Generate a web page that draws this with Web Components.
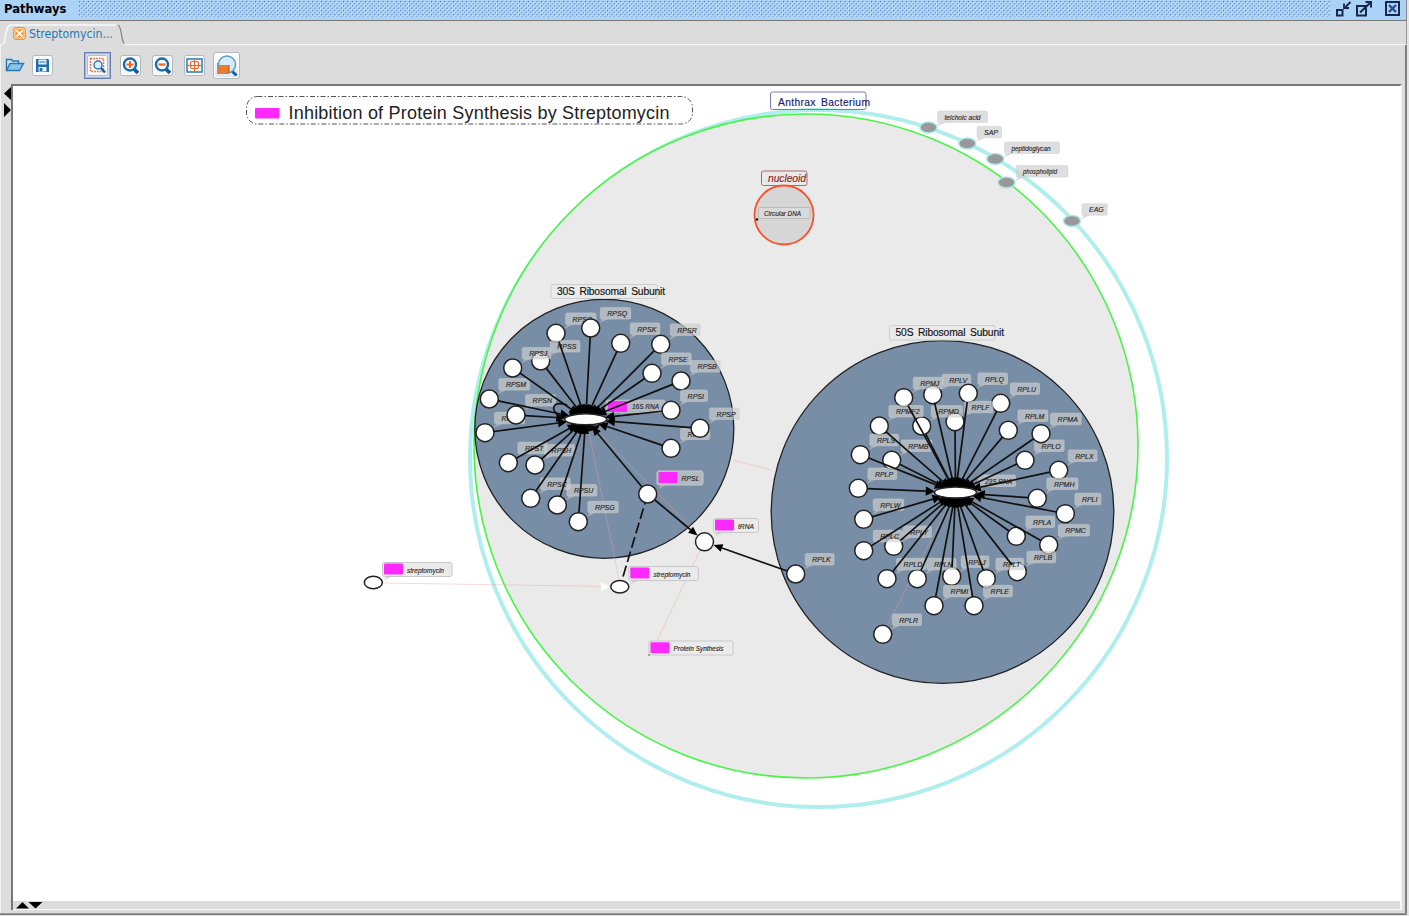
<!DOCTYPE html>
<html lang="en">
<head>
<meta charset="utf-8">
<title>Pathways</title>
<style>
html,body{margin:0;height:100%;overflow:hidden;background:#dcdcdc}
body{font-family:"DejaVu Sans","Noto Sans",sans-serif}
</style>
</head>
<body>
<pathway-window>
  <window-title slot="title">Pathways</window-title>
  <document-tab slot="tabs">Streptomycin...</document-tab>
  <tool-bar slot="tools"></tool-bar>
  <pathway-canvas slot="canvas"></pathway-canvas>
</pathway-window>

<script>
const shadow = (el, html) => { el.attachShadow({mode:'open'}).innerHTML = html; };

customElements.define('pathway-window', class extends HTMLElement {
  constructor(){ super(); shadow(this, `
<style>
:host{display:flex;flex-direction:column;box-sizing:border-box;width:1409px;height:916px;background:#dcdcdc;border-right:2px solid #e6e6e6}
.tabs{box-sizing:border-box;height:24px;border-bottom:1px solid #f6f6f6;border-right:1px solid #999;padding-left:3px}
.body{flex:1;display:flex;flex-direction:column;border-right:2px solid #808080;border-left:1px solid #f4f4f4;min-height:0}
.tools{height:39px}
.main{display:flex;box-sizing:border-box;padding-right:3px;height:826px}
.rail{width:10px;padding-top:3px;box-sizing:border-box}
.rail svg{display:block}
.view{flex:1;display:flex;flex-direction:column;border-left:2px solid #777;border-top:2px solid #777;border-right:2px solid #f7f7f7;box-sizing:border-box;min-width:0}
.canvas{height:815px;overflow:hidden;background:#fff}
.foot{flex:1;border-bottom:1px solid #f8f8f8}
.foot svg{display:block}
.edge{height:1px;background:#777;border-top:1px solid #999;border-bottom:1px solid #e2e2e2}
</style>
<slot name="title"></slot>
<div class="tabs"><slot name="tabs"></slot></div>
<div class="body">
 <div class="tools"><slot name="tools"></slot></div>
 <div class="main">
  <div class="rail"><svg width="10" height="30"><path d="M10 0v13L3 6.500zM3 16v14L10 23z"/></svg></div>
  <div class="view"><div class="canvas"><slot name="canvas"></slot></div>
  <div class="foot"><svg width="40" height="8"><path d="M3 7.500 9.500 1 16 7.500zM15.500 1h14L22.500 7.500z"/></svg></div></div>
 </div>
</div>
<div class="edge"></div>`); }
});

customElements.define('window-title', class extends HTMLElement {
  constructor(){ super(); shadow(this, `
<style>
:host{display:flex;align-items:flex-start;box-sizing:border-box;height:21px;background:#abd2f7;border-bottom:1px solid #777;border-right:1px solid #888;padding:0 6px 0 4px}
b{width:75px;flex:none;font:bold 11.500px/18px "DejaVu Sans",sans-serif;color:#000}
b span{display:inline-block;transform:scaleX(1.008);transform-origin:0 0}
svg{display:block;flex:none}
.grip{margin-top:1px}
.ic{margin-left:3px}
</style>
<b><span><slot></slot></span></b>
<svg class="grip" width="1251" height="17"><defs><pattern id="g" width="4" height="4" patternUnits="userSpaceOnUse" patternTransform="scale(1.1)"><rect width="4" height="4" fill="#abd2f7"/><path d="M0 0h1v1h-1zM2 2h1v1h-1z" fill="#3560a0"/><path d="M1 1h1v1h-1zM3 3h1v1h-1z" fill="#e4f2ff"/></pattern></defs><rect width="1251" height="16" fill="url(#g)"/></svg>
<svg class="ic" width="70" height="18" fill="none" stroke="#16294d" stroke-width="2">
<path d="M4 10h5.500v5.500H4z"/><path d="M17.500 2 11 8.500M11 3.500V8h5" stroke-width="1.800"/>
<path d="M24 6h9v9.500h-9z"/><path d="M27 12.500 38 2M32.500 2H38v5.500" stroke-width="2"/>
<path d="M53 2h13v13H53z"/><path d="m56 5 7 7m0-7-7 7" stroke="#2c4d8e" stroke-width="2.400"/></svg>`); }
});

customElements.define('document-tab', class extends HTMLElement {
  constructor(){ super(); shadow(this, `
<style>
:host{display:grid;width:124px;height:24px;font:12px/24px "DejaVu Sans",sans-serif;color:#2279b5}
svg,.t{grid-area:1/1}
.t{display:flex;align-items:center;gap:3px;padding:0 0 0 10px;height:25px}
.t span{display:block;transform:scaleX(.915);transform-origin:0 0;white-space:nowrap}
</style>
<svg width="124" height="24"><path d="M0 24C3 20 2 4 8 4H113C117 4 118 20 121 24" fill="#dcdcdc"/><path d="M0 23C3 20 2 4 8 4H113" fill="none" stroke="#f8f8f8" stroke-width="1.500"/><path d="M115 4C119 6 118 19 121 22.500" fill="none" stroke="#888" stroke-width="1.300"/></svg>
<div class="t"><svg width="13" height="13" style="grid-area:auto"><rect x=".5" y=".5" width="12" height="12" rx="2.500" fill="#ffc583" stroke="#ee9636"/><path d="m3.500 3.500 6 6m0-6-6 6" stroke="#ee8424" stroke-width="4"/><path d="m3.500 3.500 6 6m0-6-6 6" stroke="#fff" stroke-width="2"/></svg><span><slot></slot></span></div>`); }
});

customElements.define('tool-button', class extends HTMLElement {
  constructor(){ super(); shadow(this, `
<style>
:host{display:flex;align-items:center;justify-content:center;box-sizing:border-box;flex:none;width:21px;height:21px;border:1px solid #b3b8bd;border-radius:3px;background:#f5f8fa;box-shadow:inset 0 0 0 1px #fff}
:host([flat]){border:0;background:none;box-shadow:none;width:20px}
:host([active]){width:27px;height:27px;border:1px solid #667cab;border-radius:0;background:#d4dbe7;box-shadow:inset 0 0 0 1px #aab6d0}
:host([big]){width:27px;height:27px;background:linear-gradient(#fff,#dce9f2)}
</style><slot></slot>`); }
});

customElements.define('tool-bar', class extends HTMLElement {
  constructor(){
    super();
    const mag = s => `<svg width="19" height="19"><path d="m12 12 5 5" stroke="#155d9a" stroke-width="3.800"/><circle cx="9" cy="8.500" r="6" fill="#fff" stroke="#1c68a8" stroke-width="2.400"/><path d="${s}" stroke="#f26522" stroke-width="2.200"/></svg>`;
    shadow(this, `
<style>
:host{display:flex;align-items:center;height:40px;padding-left:4px}
svg{display:block}
.gap{width:31px}.g{width:9px}.h{width:11px}.i{width:8px}.m{width:7px}
</style>
<tool-button flat><svg width="20" height="16"><path d="M1.500 13.500v-11h5l1 1.500h6v2.500" fill="#cde5f5" stroke="#2978b2" stroke-width="1.400"/><path d="M1.500 13.500 5 6.500h13.500l-4 7z" fill="#8cc3e6" stroke="#2978b2" stroke-width="1.400"/></svg></tool-button>
<div class="m"></div>
<tool-button><svg width="15" height="15"><path d="M1 1h12l1 1v12H1z" fill="#1d6fae"/><path d="M3.500 1.500h8v5h-8zM3.500 9h8v4.500h-8z" fill="#e8f4fc"/><path d="M4.500 4h6M5 10.500h2v2H5z" stroke="#1d6fae" fill="#1d6fae"/></svg></tool-button>
<div class="gap"></div>
<tool-button active><svg width="21" height="21"><rect x=".5" y=".5" width="20" height="20" rx="2" fill="#f9fafb" stroke="#b7babd"/><path d="M3.500 3.500h13v13h-13z" fill="none" stroke="#e9733d" stroke-width="1.500" stroke-dasharray="1.800 1"/><circle cx="11" cy="10" r="4" fill="#d9edf8" stroke="#2b78b3" stroke-width="1.400"/><path d="m14 13 4 4.500" stroke="#17609e" stroke-width="2.400"/></svg></tool-button>
<div class="g"></div><tool-button>${mag('M5.500 8.500h7M9 5v7')}</tool-button>
<div class="h"></div><tool-button>${mag('M5.500 8.500h7')}</tool-button>
<div class="h"></div><tool-button><svg width="17" height="15"><rect x="1" y="1" width="15" height="13" fill="#fff" stroke="#2978b2" stroke-width="1.500"/><path d="M2 7.500h13M8.500 2v11" stroke="#f26522" stroke-width="1.200"/><rect x="4.500" y="3.500" width="8" height="7" rx="1.500" fill="none" stroke="#f26522" stroke-width="1.200"/></svg></tool-button>
<div class="i"></div><tool-button big><svg width="23" height="23"><path d="M2 9h12v11H2z" fill="#ee7a2c"/><path d="m16 16 5.500 5.500" stroke="#17609e" stroke-width="3"/><circle cx="12" cy="10.500" r="8.500" fill="#d8ebf6" stroke="#5f9cc5" stroke-width="1.500"/><path d="M3.300 11H14v7.800H6z" fill="#ee7a2c"/><path d="M14 11v8" stroke="#b94c10"/></svg></tool-button>`);
  }
});

/* name, x, y of each node; later entries are painted above earlier ones */
const SMALL = [
 ['RPSO',556,333.3],['RPSQ',590.7,328],['RPSS',540.7,361],['RPSJ',512.7,368],['RPSM',489.3,399],['RPSD',485,432.7],['RPSN',516,415],
 ['RPSK',620.7,343.3],['RPSR',660.7,344.3],['RPSE',652,373.3],['RPSB',681,381],['RPSI',671,410.3],['RPSF',671,448.3],['RPSP',700,428.3],
 ['RPST',508.3,462.7],['RPSH',535,465],['RPSC',530.7,498.3],['RPSU',557.3,505],['RPSG',578.3,521.7]];
const LARGE = [
 ['RPLV',932.7,394.7],['RPMJ',903.7,397.7],['RPLQ',968.3,393.3],['RPLU',1000.7,403.3],['RPLF',955,421.7],['RPMD',921.7,426],['RPMF2',879.3,426],
 ['RPLM',1008.3,430.3],['RPLO',1025,460.3],['RPMA',1041,433.7],['RPLX',1058.7,470.3],['RPMH',1037.3,498.3],['RPLI',1065.3,513.7],
 ['RPLS',860.3,454.7],['RPMB',891.7,460.3],['RPLP',858.3,488.3],['RPLW',863.7,519.3],['RPLY',893.7,546.3],['RPLC',863.7,550.7],
 ['RPLA',1016.3,536.3],['RPMC',1048.7,545],['RPLB',1017.3,571.7],['RPLT',986.3,578.7],['RPLJ',951.7,576.3],['RPLN',917.3,578.7],['RPLD',887,578.7],
 ['RPMI',934,605.7],['RPLE',974,605.7]];

customElements.define('pathway-canvas', class extends HTMLElement {
  constructor(){
    super();
    const cx = document.createElement('canvas').getContext('2d');
    cx.font = 'italic 70px "Liberation Sans"';
    const tw = s => cx.measureText(s).width / 10;
    const text = (s,x,y,w) => `<text class="n" x="${x}" y="${y}" textLength="${w||tw(s)}" lengthAdjust="spacingAndGlyphs">${s}</text>`;
    const tail = (x,y) => `<path class="tail" d="M${x+2} ${y}L${x-1} ${y+4}L${x+8} ${y}z"/>`;
    const label = (s,x,y,w,bw) => { const t = w||tw(s); return tail(x,y+11.5)+`<rect class="lb" x="${x}" y="${y}" width="${bw||t+10.5}" height="11.500" rx="1.500"/>`+text(s,x+7,y+8.6,t); };
    const node = ([s,x,y]) => label(s,x+9.6,y-20.4)+`<circle class="c" cx="${x}" cy="${y}" r="9"/>`;
    const arrow = (x1,y1,x2,y2,w=4) => {
      const a = Math.atan2(y2-y1,x2-x1), c=Math.cos(a), s=Math.sin(a), bx=x2-9*c, by=y2-9*s;
      return `<path class="e" d="M${x1+9*c} ${y1+9*s}L${bx} ${by}"/><path d="M${x2} ${y2}L${bx-w*s} ${by+w*c}L${bx+w*s} ${by-w*c}z"/>`;
    };
    const toHub = (hx,hy) => ([,x,y]) => { const dx=x-hx, dy=y-hy, k=1/Math.hypot(dx/21,dy/5.5); return arrow(x,y,hx+dx*k,hy+dy*k,4.6); };
    const pink = (x,y,w=19,h=11) => `<rect x="${x}" y="${y}" width="${w}" height="${h}" rx="1" fill="#ff28ff"/>`;
    const tagged = (s,x,y,w,tx,t,fill='lg') => tail(x+2,y+14)+`<rect class="${fill}" x="${x}" y="${y}" width="${w}" height="14" rx="2"/>`+pink(x+1.5,y+1)+text(s,tx,y+10,t);
    const head = (s,x,y,w,h,tx,t,c,sc,it='') => `<rect x="${x}" y="${y}" width="${w}" height="${h}" rx="2" fill="none" stroke="${sc}"/><text x="${tx}" y="${y+h-4}" textLength="${t}" fill="${c}" stroke="${c}" stroke-width=".15" font-size="10.300" word-spacing="2" ${it}>${s}</text>`;
    const oval = (x,y) => `<ellipse cx="${x}" cy="${y}" rx="8.500" ry="5.500" fill="#999" stroke="#a9e9e9" stroke-width="1.500"/>`;
    /* solid rim where the arrowheads crowd together around a hub */
    const rim = (x,y) => `<path d="M${x-17} ${y-4}L${x-13} ${y-10}L${x} ${y-13}L${x+13} ${y-10}L${x+17} ${y-4}zM${x-15} ${y+4}L${x-12} ${y+10}L${x} ${y+13}L${x+12} ${y+10}L${x+15} ${y+4}z" fill="#080808"/>`;
    shadow(this, `
<style>
:host{display:block;width:1388px;height:816px}
svg{display:block}
text{font-family:"Liberation Sans",Arial,sans-serif}
.n{font-size:7px;font-style:italic;fill:#222;stroke:#222;stroke-width:.12}
.c{fill:#fff;stroke:#222;stroke-width:1.500}
.e{stroke:#111;stroke-width:1.700;fill:none}
.lb{fill:#cecece;fill-opacity:.67;stroke:#d0d0d0;stroke-opacity:.5}
.lg{fill:#ebebeb;stroke:#c8c8c8}
.lt{fill:#cecece;fill-opacity:.67;stroke:#c8c8c8}
.tail{fill:#c4c4c4;fill-opacity:.6}
.p{stroke:#f0a0a0;stroke-opacity:.4;fill:none}
</style>
<svg width="1388" height="816" viewBox="13 86 1388 816">
<circle cx="818.500" cy="458.500" r="348.500" fill="#fff" stroke="#b0eeee" stroke-width="4"/>
<circle cx="806" cy="446" r="332" fill="#eaeaea" stroke="#46f546" stroke-width="1.600"/>
<rect x="246.500" y="96.500" width="446" height="27.500" rx="11" fill="none" stroke="#555" stroke-dasharray="5 2 1.500 2"/>
${pink(255,108,24.5,10.5)}
<text x="288.500" y="118.500" font-size="18" textLength="381" fill="#222">Inhibition of Protein Synthesis by Streptomycin</text>
${head('Anthrax Bacterium',770.5,92,95.5,17.5,778,92,'#191970','#7878b8')}
${oval(928.5,127.5)}${oval(967.3,143.5)}${oval(995.3,159)}${oval(1006.5,182.5)}${oval(1072,221)}
${label('teichoic acid',937.5,111,36,50)}${label('SAP',977,126.3)}${label('peptidoglycan',1004.5,142,39,55)}${label('phospholipid',1016,165.6,34,52)}${label('EAG',1082,203.8)}
<circle cx="784" cy="215" r="29.500" fill="#d6d6d6" stroke="#fc5028" stroke-width="1.800"/>
${head('nucleoid',761.5,171,45.5,14.5,768,38,'#8b2828','#b06868','font-style="italic"')}
<rect x="758.500" y="207.500" width="51.500" height="11" rx="1" fill="#dadada" stroke="#bbb"/>${text('Circular DNA',764,216,37)}<circle cx="757" cy="219.500" r="1.200"/>
<circle cx="604.300" cy="428.800" r="129.500" fill="#788ea6" stroke="#222" stroke-width="1.300"/>
<circle cx="942.500" cy="512" r="171.300" fill="#788ea6" stroke="#222" stroke-width="1.300"/>
${head('30S Ribosomal Subunit',551,284.5,106.5,14,557,108,'#111','#ccc')}
${head('50S Ribosomal Subunit',889.5,325.5,105.5,14.5,895.5,108.5,'#111','#ccc')}
<path class="p" d="M382 583 610 586.500M704 542 655 645M733 460 771 470"/>
<path class="p" stroke-opacity=".2" d="M619 580 588 427M704 541 590 424M883 634 955 493"/>
${tail(619,413)}<rect class="lb" x="606" y="400" width="59" height="12.500" rx="2"/>${text('16S RNA',632,409,27)}${pink(608,401,19,11)}
${SMALL.map(node).join('')}
${label('23S RNA',978,475,27)}
${LARGE.map(node).join('')}
${node(['RPLR',882.7,634.3])}${node(['RPLK',795.7,574])}
${rim(585.7,419.3)}${rim(955.5,492.5)}
${SMALL.map(toHub(585.7,419.3)).join('')}
${LARGE.map(toHub(955.5,492.5)).join('')}
${tagged('RPSL',657,471,46,681.5,18,'lt')}
<path class="e" d="M562 418C548 409 553 400 567 405"/>
<circle class="c" cx="595" cy="421" r="5"/>
<ellipse class="c" cx="585.700" cy="419.300" rx="21" ry="5.500"/>
<ellipse class="c" cx="955.500" cy="492.500" rx="21" ry="5.500"/>
<path class="e" d="M647.700 494 622 580" stroke-dasharray="11 4"/>
${arrow(647.7,494,592,426.5)}${arrow(647.7,494,697.5,535.5)}${arrow(795.7,574,713.5,545)}
<circle class="c" cx="647.700" cy="494" r="9"/><circle class="c" cx="704.500" cy="541.800" r="9"/>
<ellipse class="c" cx="373.300" cy="582.500" rx="9" ry="6.200"/><ellipse class="c" cx="619.800" cy="586.800" rx="9" ry="6.200"/>
<path d="M601 582.500v8.500l9-4z" fill="#fff"/>
${tagged('tRNA',713.5,518.5,45,738,16)}
${tagged('streptomycin',382.5,562.5,69.5,407,37)}
${tagged('streptomycin',628.8,566.5,69.5,653.5,37)}
<rect class="lg" x="649" y="641" width="84" height="14" rx="2"/>${pink(650.5,642.2)}${text('Protein Synthesis',673.5,650.8,50)}<circle cx="649" cy="655" r=".8" fill="#555"/>
</svg>`);
  }
});
</script>
</body>
</html>
